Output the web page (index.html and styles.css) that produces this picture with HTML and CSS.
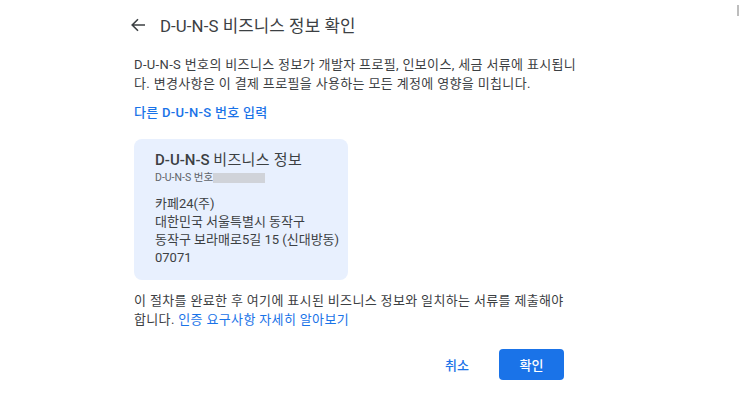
FILE: index.html
```html
<!DOCTYPE html>
<html lang="ko">
<head>
<meta charset="utf-8">
<title>D-U-N-S 비즈니스 정보 확인</title>
<link rel="stylesheet" href="styles.css">
</head>
<body>
<div class="scroll-thumb"></div>
<main class="dialog">
  <header class="dialog-header">
    <button class="back-btn" aria-label="뒤로">
      <svg width="16" height="16" viewBox="0 0 16 16"><path d="M15 8H2.5M8 2.2 2.2 8 8 13.8" fill="none" stroke="#3c4043" stroke-width="1.6"/></svg>
    </button>
    <h1 class="dialog-title">D-U-N-S 비즈니스 정보 확인</h1>
  </header>

  <p class="desc">D-U-N-S 번호의 비즈니스 정보가 개발자 프로필, 인보이스, 세금 서류에 표시됩니다. 변경사항은 이 결제 프로필을 사용하는 모든 계정에 영향을 미칩니다.</p>

  <a class="link-strong" href="#">다른 D-U-N-S 번호 입력</a>

  <section class="info-card">
    <h2 class="card-title">D-U-N-S <span class="card-title-ko">비즈니스 정보</span></h2>
    <div class="duns-no">D-U-N-S 번호<span class="masked"></span></div>
    <address class="addr">
      카페24(주)<br>
      대한민국 서울특별시 동작구<br>
      동작구 보라매로5길 15 (신대방동)<br>
      07071
    </address>
  </section>

  <p class="note">이 절차를 완료한 후 여기에 표시된 비즈니스 정보와 일치하는 서류를 제출해야 합니다. <a class="link" href="#">인증 요구사항 자세히 알아보기</a></p>

  <footer class="actions">
    <button class="btn-text">취소</button>
    <button class="btn-primary">확인</button>
  </footer>
</main>
</body>
</html>
```

FILE: styles.css
```css
* { box-sizing: border-box; }

html, body {
  margin: 0;
  background: #fff;
}

body {
  font-family: Roboto, "Noto Sans CJK KR", "Noto Sans", sans-serif;
  color: #3c4043;
  position: relative;
  height: 402px;
  overflow: hidden;
}

.scroll-thumb {
  position: absolute;
  right: 1px;
  top: 5px;
  width: 2px;
  height: 11px;
  background: #bdbdbd;
}

.dialog {
  width: 444px;
  margin-left: 134px;
  padding-top: 13px;
  display: flex;
  flex-direction: column;
}

.dialog-header {
  display: flex;
  align-items: center;
  margin-left: -8px;
  height: 24px;
}

.back-btn {
  border: 0;
  background: none;
  padding: 0;
  width: 24px;
  height: 24px;
  display: flex;
  align-items: center;
  justify-content: center;
  margin-right: 10px;
}

.dialog-title {
  margin: 0;
  font-size: 16.8px;
  font-weight: 400;
  color: #3c4043;
  letter-spacing: 0.1px;
}

.desc {
  margin: 18px 0 0;
  font-size: 13px;
  line-height: 19px;
  letter-spacing: 0.35px;
}

.link-strong {
  margin-top: 11px;
  font-size: 13px;
  font-weight: 500;
  color: #1a73e8;
  text-decoration: none;
  line-height: 18px;
  letter-spacing: 0.3px;
  align-self: flex-start;
}

.info-card {
  margin-top: 17px;
  width: 214px;
  background: #e8f0fe;
  border-radius: 8px;
  padding: 11px 0 13px 21px;
}

.card-title {
  margin: 0;
  font-size: 15px;
  font-weight: 500;
  color: #3c4043;
  line-height: 20px;
}

.card-title-ko {
  font-weight: 400;
  letter-spacing: 0.3px;
}

.duns-no {
  font-size: 10.5px;
  color: #5f6368;
  line-height: 15px;
  display: flex;
  align-items: center;
}

.masked {
  display: inline-block;
  width: 52px;
  height: 10px;
  background: #d0d3d9;
  filter: blur(0.6px);
}

.addr {
  margin-top: 10px;
  font-style: normal;
  font-size: 13px;
  line-height: 18px;
  color: #3c4043;
}

.note {
  margin: 11px 0 0;
  font-size: 13px;
  line-height: 19px;
  letter-spacing: 0.35px;
}

.link {
  color: #1a73e8;
  text-decoration: none;
}

.actions {
  margin-top: 18px;
  display: flex;
  justify-content: flex-end;
  align-items: center;
  gap: 26px;
  padding-right: 14px;
}

.btn-text {
  border: 0;
  background: none;
  font: inherit;
  font-size: 13px;
  font-weight: 500;
  color: #1a73e8;
  padding: 8px 4px;
}

.btn-primary {
  border: 0;
  border-radius: 4px;
  background: #1a73e8;
  color: #fff;
  font: inherit;
  font-size: 13px;
  font-weight: 500;
  width: 65px;
  height: 31px;
}
```
